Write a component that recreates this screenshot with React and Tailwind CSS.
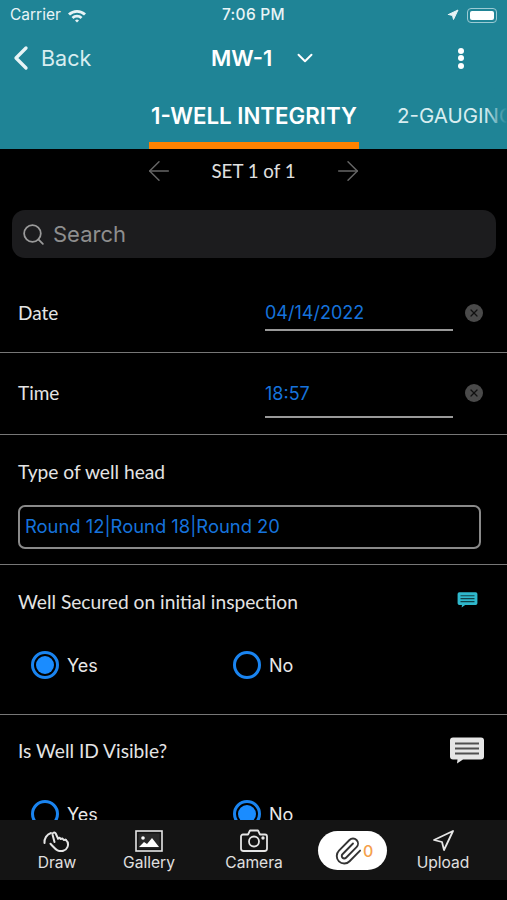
import React from "react";
import { ChevronDown, ChevronLeft, ArrowLeft, ArrowRight, Search, X, Paperclip, Navigation } from "lucide-react";

const sfFont = "font-['Inter','Liberation_Sans',sans-serif]";
const labelFont = "font-['Lato','Noto_Sans',sans-serif]";

const ChatIcon = ({ className }) => (
  <svg viewBox="0 0 36 28" className={className}>
    <path
      d="M4 1.5h28a3 3 0 0 1 3 3v16a3 3 0 0 1-3 3H14l-6 4 .5-4H4a3 3 0 0 1-3-3v-16a3 3 0 0 1 3-3z"
      fill="currentColor"
    />
    <path d="M6 7.5h24M6 12.5h24M6 17.5h24" stroke="#000" strokeOpacity="0.65" strokeWidth="2" />
  </svg>
);

const GalleryIcon = () => (
  <svg viewBox="0 0 28 22" className="w-[28px] h-[22px]">
    <rect x="1" y="1" width="26" height="20" fill="none" stroke="#e5e5e5" strokeWidth="1.6" />
    <rect x="3.5" y="3.5" width="21" height="15" fill="#2a2a2a" />
    <circle cx="8" cy="8" r="1.8" fill="#fff" />
    <path d="M4 17l5-5 3 2 5-6 7 9z" fill="#fff" />
  </svg>
);

const DrawIcon = () => (
  <svg viewBox="0 0 28 22" fill="none" stroke="#e5e5e5" strokeWidth="2" strokeLinecap="round" strokeLinejoin="round" className="w-[28px] h-[22px]">
    <path d="M1.5 13A9.5 9.5 0 0 1 8 3" />
    <path d="M11.5 12L9.5 4.5a1.7 1.7 0 0 1 3.2-1L15 8.5" />
    <path d="M15 8.5l1.5-.8 1.2 1.3 1.8-.5 1.2 1.5 2-.3" />
    <path d="M22.7 9.7a6.5 6.5 0 0 1 1.8 7.3c-1.5 4-6.5 5-10 3.3-2.5-1.2-4.5-4-7-6.5" />
  </svg>
);

const CameraIcon = () => (
  <svg viewBox="0 0 28 23" fill="none" stroke="#e5e5e5" strokeWidth="1.8" strokeLinejoin="round" className="w-[28px] h-[23px]">
    <path d="M3 5.5h5l2-4h8l2 4h5a2 2 0 0 1 2 2v12a2.5 2.5 0 0 1-2.5 2.5h-21A2.5 2.5 0 0 1 1 19.500v-12a2 2 0 0 1 2-2z" />
    <circle cx="14" cy="12.500" r="5" />
    <circle cx="23" cy="9" r="0.8" fill="#e5e5e5" />
  </svg>
);

const Radio = ({ label, checked }) => (
  <div className="flex items-center gap-[8px]">
    <div className="w-[28px] h-[28px] rounded-full border-[3px] border-[#1a84f0] flex items-center justify-center shrink-0">
      {checked && <div className="w-[18px] h-[18px] rounded-full bg-[#1a8cff]" />}
    </div>
    <span className={`text-[18px] text-[#e8e8e8] ${sfFont}`}>{label}</span>
  </div>
);

const RadioRow = ({ value }) => (
  <div className="flex pl-[31px]">
    <div className="w-[202px]">
      <Radio label="Yes" checked={value === "yes"} />
    </div>
    <Radio label="No" checked={value === "no"} />
  </div>
);

const DateField = ({ label, value, height, lineGap }) => (
  <div className={`flex pl-[18px] pr-[24px] border-b border-[#777] ${height}`}>
    <span className={`w-[247px] text-[19px] leading-[24px] text-[#e4e4e4] ${labelFont}`}>{label}</span>
    <div className="w-[188px]">
      <div className={`text-[18px] leading-[24px] text-[#1673dc] border-b-2 border-[#999] ${lineGap} ${sfFont}`}>
        {value}
      </div>
    </div>
    <div className="ml-auto w-[18px] h-[18px] mt-[3px] rounded-full bg-[#4a4a4a] flex items-center justify-center">
      <X size={12} strokeWidth={2.5} className="text-[#111]" />
    </div>
  </div>
);

const ToolButton = ({ icon, label, width }) => (
  <div className={`flex flex-col items-center ${width}`}>
    <div className="h-[23px] flex items-center justify-center">{icon}</div>
    <span className={`text-[15.600px] leading-[20px] mt-[1px] text-[#e0e0e0] ${sfFont}`}>{label}</span>
  </div>
);

export default function App() {
  return (
    <div className="w-[507px] h-[900px] bg-black flex flex-col overflow-hidden">
      {/* teal header */}
      <div className="h-[149px] shrink-0 bg-[#1f8496] text-white flex flex-col">
        <div className={`h-[30px] px-[10px] flex items-center text-[#e8f4f6] ${sfFont}`}>
          <div className="flex-1 flex items-center gap-[6px] text-[15.500px]">
            Carrier
            <svg viewBox="0 0 20 15" className="w-[20px] h-[15px]">
              <path d="M1 5.500a13 13 0 0 1 18 0l-2 2a10 10 0 0 0-14 0z" fill="currentColor" />
              <path d="M4.500 9a8 8 0 0 1 11 0l-2 2a5 5 0 0 0-7 0z" fill="currentColor" />
              <path d="M8 12.500a3 3 0 0 1 4 0l-2 2z" fill="currentColor" />
            </svg>
          </div>
          <div className="text-[15.500px] font-medium tracking-[0.3px]">7:06 PM</div>
          <div className="flex-1 flex items-center justify-end gap-[8px]">
            <Navigation size={12} fill="currentColor" />
            <div className="w-[30px] h-[15px] rounded-[4px] border border-[#9ccbd4] p-[2px]">
              <div className="w-full h-full rounded-[2px] bg-white" />
            </div>
          </div>
        </div>
        <div className={`h-[56px] flex items-center relative ${sfFont}`}>
          <ChevronLeft size={40} strokeWidth={2} className="ml-[1px] text-[#e8f4f6]" />
          <span className="text-[21.500px] text-[#d8edf0]">Back</span>
          <div className="absolute left-[211px] top-0 h-full flex items-center">
            <span className="text-[22px] font-semibold">MW-1</span>
            <ChevronDown size={26} strokeWidth={1.8} className="ml-[20px]" />
          </div>
          <div className="ml-auto mr-[43px] flex flex-col gap-[1.500px]">
            <div className="w-[6px] h-[6px] rounded-full bg-white" />
            <div className="w-[6px] h-[6px] rounded-full bg-white" />
            <div className="w-[6px] h-[6px] rounded-full bg-white" />
          </div>
        </div>
        <div className={`flex-1 flex pl-[149px] overflow-hidden relative ${sfFont}`}>
          <div className="w-[210px] shrink-0 border-b-[7px] border-[#ff8200] text-center text-[22.300px] leading-[30px] pt-[15px] font-semibold whitespace-nowrap">
            1-WELL INTEGRITY
          </div>
          <div className="ml-[38px] text-[20.500px] leading-[30px] pt-[15px] whitespace-nowrap text-[#d8edf0]">
            2-GAUGING
          </div>
          <div className="absolute right-0 top-0 bottom-0 w-[22px] bg-gradient-to-l from-[#1f8496] to-transparent" />
        </div>
      </div>

      {/* form */}
      <div className="flex-1 min-h-0 overflow-hidden">
        <div className="h-[44px] flex items-center justify-center">
          <ArrowLeft size={32} strokeWidth={1.1} className="text-[#666]" />
          <span className={`mx-[36px] text-[18.700px] text-[#e0e0e0] ${labelFont}`}>SET 1 of 1</span>
          <ArrowRight size={32} strokeWidth={1.1} className="text-[#666]" />
        </div>
        <div className="ml-[12px] w-[484px] mt-[17px] h-[48px] rounded-[13px] bg-[#1c1c1e] flex items-center pl-[9px] gap-[7px]">
          <Search size={25} strokeWidth={1.7} className="text-[#9a9a9a]" />
          <span className={`text-[22px] text-[#8e8e8e] ${sfFont}`}>Search</span>
        </div>

        <div className="pt-[43px]">
          <DateField label="Date" value="04/14/2022" height="h-[52px]" lineGap="pb-[4px]" />
        </div>
        <div className="pt-[28px]">
          <DateField label="Time" value="18:57" height="h-[54px]" lineGap="pt-[1px] pb-[10px]" />
        </div>

        <div className="h-[130px] border-b border-[#777] pl-[18px] pt-[25px]">
          <div className={`text-[19.200px] leading-[24px] text-[#e4e4e4] ${labelFont}`}>Type of well head</div>
          <div className={`mt-[21px] w-[463px] h-[44px] border-2 border-[#8a8a8a] rounded-[7px] flex items-center pl-[5px] text-[18.400px] text-[#1673dc] ${sfFont}`}>
            Round 12|Round 18|Round 20
          </div>
        </div>

        <div className="h-[150px] border-b border-[#777]">
          <div className="h-[75px] flex items-center pl-[18px] pr-[29px]">
            <span className={`flex-1 text-[19.200px] text-[#e4e4e4] ${labelFont}`}>Well Secured on initial inspection</span>
            <ChatIcon className="w-[21px] h-[17px] mb-[6px] text-[#2fb8cc]" />
          </div>
          <div className="pt-[11px]">
            <RadioRow value="yes" />
          </div>
        </div>

        <div className="h-[73px] flex items-center pl-[18px] pr-[22px]">
          <span className={`flex-1 text-[19.200px] text-[#e4e4e4] ${labelFont}`}>Is Well ID Visible?</span>
          <ChatIcon className="w-[36px] h-[28px] mb-[3px] text-[#e6e6e6]" />
        </div>
        <div className="pt-[12px]">
          <RadioRow value="no" />
        </div>
      </div>

      {/* bottom toolbar */}
      <div className="h-[60px] shrink-0 bg-[#141414] flex items-start pl-[11px] pt-[9px]">
        <ToolButton width="w-[92px]" label="Draw" icon={<DrawIcon />} />
        <ToolButton width="w-[92px]" label="Gallery" icon={<GalleryIcon />} />
        <ToolButton width="w-[118px]" label="Camera" icon={<CameraIcon />} />
        <div className="ml-[5px] mt-[2px] w-[69px] h-[39px] rounded-full bg-white flex items-center pl-[15px]">
          <Paperclip size={30} strokeWidth={1.5} className="text-[#333] shrink-0" />
          <span className={`text-[16px] font-medium text-[#f5a04a] ${sfFont}`}>0</span>
        </div>
        <ToolButton
          width="w-[112px]"
          label="Upload"
          icon={<Navigation size={24} strokeWidth={1.8} className="text-[#e5e5e5]" />}
        />
      </div>
      <div className="h-[20px] shrink-0 bg-black" />
    </div>
  );
}
